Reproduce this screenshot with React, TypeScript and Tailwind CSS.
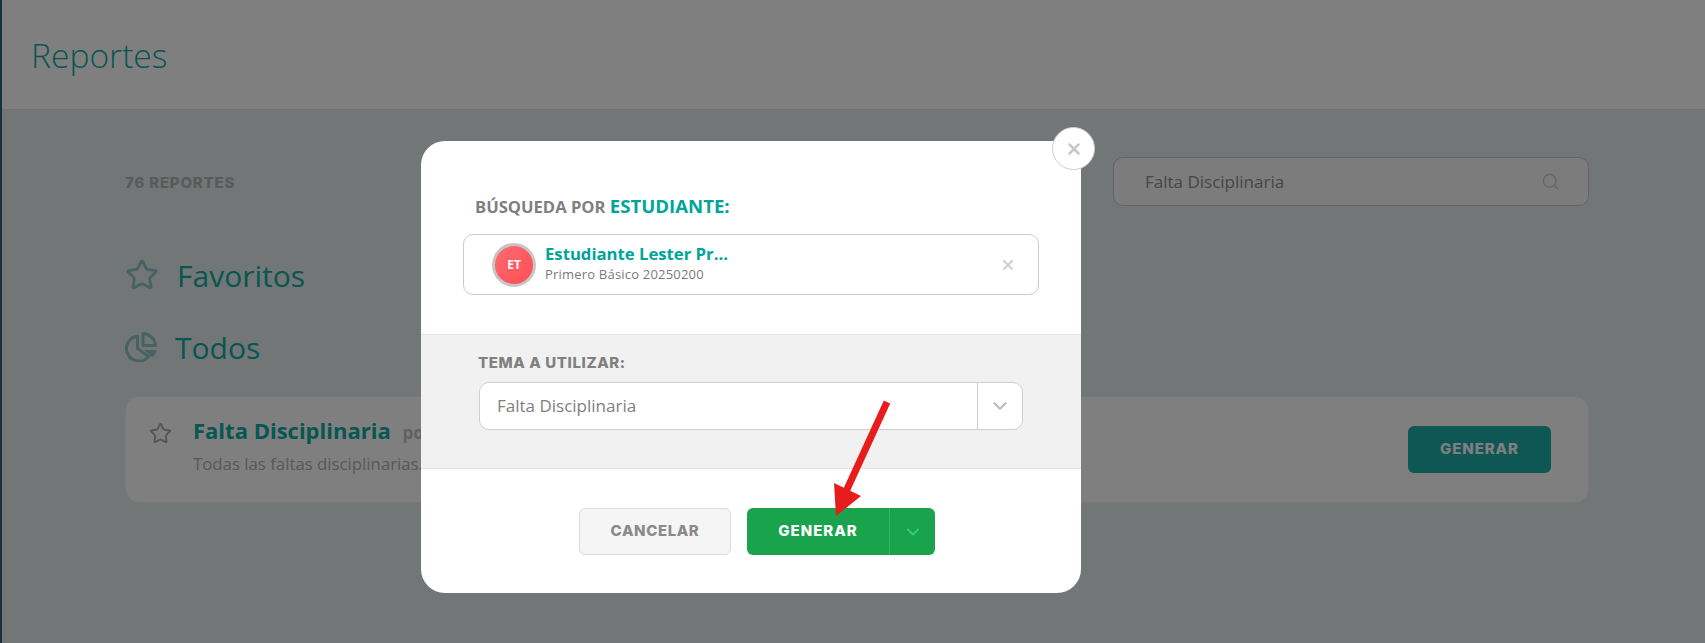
// App.tsx
// Reportes page with the "generar reporte" modal open

import { ChevronDown, Search, Star, X } from 'lucide-react';
import React from 'react';

const TodosIcon: React.FC = () => (
  <svg width="33" height="30" viewBox="0 0 33 30" fill="none" stroke="#8cc4c6" strokeWidth="3">
    <path d="M12.5 4.2A12.5 12.5 0 1 0 23.6 24.6L12.5 16.5Z" strokeLinejoin="round" />
    <path d="M18 1.5A13 13 0 0 1 30.5 13.5H18Z" strokeLinejoin="round" />
    <path d="M19 18H32A13 13 0 0 1 27.5 25.5Z" fill="#8cc4c6" stroke="none" />
  </svg>
);

const RedArrow: React.FC = () => (
  <svg className="absolute left-[410px] top-[258px]" width="70" height="125" viewBox="0 0 70 125">
    <path d="M56 3L12 99" stroke="#e81c1c" strokeWidth="7" />
    <path d="M3 84L5 117L30 97Z" fill="#e81c1c" />
  </svg>
);

const Modal: React.FC = () => (
  <div className="relative w-[660px] rounded-[24px] bg-white">
    {/* Close */}
    <button className="absolute -right-[14px] -top-[14px] flex h-[43px] w-[43px] items-center justify-center rounded-full border border-[#cfcfcf] bg-white">
      <X size={18} strokeWidth={3.4} className="text-[#c8c8c8]" />
    </button>

    {/* Student */}
    <div className="h-[193px] pl-[42px] pr-[42px] pt-[53px]">
      <div className="ml-[12px] text-[16.6px] font-bold leading-[24px] text-[#7f7f7f]">
        BÚSQUEDA POR <span className="text-[18.6px] leading-[24px] text-[#00a59a]">ESTUDIANTE:</span>
      </div>
      <div className="mt-[15px] flex h-[61px] w-[576px] items-center rounded-[10px] border border-[#c5cccc] pl-[28px] pr-[22px]">
        <div className="flex h-[44px] w-[44px] items-center justify-center rounded-full border-[3px] border-[#c6c6c6] bg-linear-to-br from-[#ff6a6f] to-[#ff4d55] text-[12px] font-bold text-white">
          ET
        </div>
        <div className="ml-[9px] flex-1 pb-[3px]">
          <div className="text-[16.7px] font-bold leading-[22px] text-[#00a59a]">Estudiante Lester Pr...</div>
          <div className="mt-[1px] text-[13px] leading-[17px] tracking-[0.2px] text-[#7a7a7a]">Primero Básico 20250200</div>
        </div>
        <X size={16} strokeWidth={3.4} className="text-[#d2d2d2]" />
      </div>
    </div>

    {/* Theme */}
    <div className="h-[135px] border-y border-[#e3e3e3] bg-[#f1f1f1] pl-[58px] pt-[17px]">
      <div className="-ml-px font-['Inter',sans-serif] text-[15px] font-extrabold leading-[22px] tracking-[0.6px] text-[#808080]">
        TEMA A UTILIZAR:
      </div>
      <div className="mt-[8px] flex h-[48px] w-[544px] items-center rounded-[10px] border border-[#cfcfcf] bg-white">
        <span className="flex-1 pl-[17px] text-[17px] text-[#808080]">Falta Disciplinaria</span>
        <span className="flex h-full w-[45px] items-center justify-center border-l border-[#cfcfcf]">
          <ChevronDown size={22} strokeWidth={2.5} className="text-[#bdbdbd]" />
        </span>
      </div>
    </div>

    {/* Footer */}
    <div className="flex h-[124px] items-start gap-[16px] pl-[158px] pt-[39px]">
      <button className="h-[47px] w-[152px] rounded-[6px] border border-[#dcdcdc] bg-[#f5f5f5] font-['Inter',sans-serif] text-[15px] font-extrabold tracking-[0.6px] text-[#8a8a8a]">
        CANCELAR
      </button>
      <div className="flex h-[47px] w-[188px] overflow-hidden rounded-[6px] bg-[#18a34c] text-white">
        <button className="w-[142px] font-['Inter',sans-serif] text-[15px] font-extrabold tracking-[1px]">GENERAR</button>
        <span className="flex flex-1 items-center justify-center border-l border-[#2dbb63]">
          <ChevronDown size={20} strokeWidth={2.2} className="text-[#2fd06f]" />
        </span>
      </div>
    </div>

    <RedArrow />
  </div>
);

export default function App() {
  return (
    <div className="relative flex h-[643px] overflow-hidden bg-[#e4ecec] font-['Open_Sans',sans-serif]">
      {/* Sidebar edge */}
      <div className="w-[2px] shrink-0 bg-[#28686f]" />

      <div className="flex-1">
        {/* Header */}
        <div className="flex h-[110px] items-center border-b border-[#e0e4e4] bg-white pl-[29px] pt-[2px]">
          <h1 className="text-[33.6px] font-light text-[#10aca4]">Reportes</h1>
        </div>

        <div className="pl-[123px] pr-[116px]">
          {/* Count + search */}
          <div className="flex items-center justify-between pt-[47px]">
            <span className="pt-[4px] font-['Inter',sans-serif] text-[15px] font-extrabold tracking-[0.8px] text-[#b4b4b4]">76 REPORTES</span>
            <div className="flex h-[49px] w-[476px] items-center rounded-[10px] border border-[#c4caca] bg-[#f8f8f8] pl-[31px] pr-[28px]">
              <span className="flex-1 text-[17px] text-[#8e8e8e]">Falta Disciplinaria</span>
              <Search size={19} className="text-[#cfcfcf]" />
            </div>
          </div>

          {/* Sections */}
          <div className="mt-[49px] flex h-[40px] items-center">
            <Star size={34} strokeWidth={2} className="text-[#8cc4c6]" />
            <span className="ml-[18px] text-[30px] text-[#10aca4]">Favoritos</span>
          </div>
          <div className="mt-[32px] flex h-[40px] items-center">
            <TodosIcon />
            <span className="ml-[17px] text-[30px] text-[#10aca4]">Todos</span>
          </div>

          {/* Report card */}
          <div className="mt-[29px] flex h-[107px] items-center justify-between rounded-[14px] border border-[#eef0f0] bg-white pl-[23px] pr-[37px]">
            <div className="flex items-start self-start pt-[19px]">
              <Star size={23} strokeWidth={2} className="mt-[6px] text-[#aaaaaa]" />
              <div className="ml-[21px]">
                <div className="text-[22px] font-bold leading-[28px] text-[#10aca4]">
                  Falta Disciplinaria <span className="ml-[6px] text-[17px] text-[#c4c4c4]">por estudiante</span>
                </div>
                <div className="mt-[6px] text-[16.8px] leading-[22px] text-[#b0b0b0]">Todas las faltas disciplinarias.</div>
              </div>
            </div>
            <button className="h-[47px] w-[143px] rounded-[6px] bg-[#1eaeaa] font-['Inter',sans-serif] text-[15px] font-extrabold tracking-[0.9px] text-white">
              GENERAR
            </button>
          </div>
        </div>
      </div>

      {/* Overlay */}
      <div className="absolute inset-0 bg-black/50 pl-[421px] pt-[141px]">
        <Modal />
      </div>
    </div>
  );
}
